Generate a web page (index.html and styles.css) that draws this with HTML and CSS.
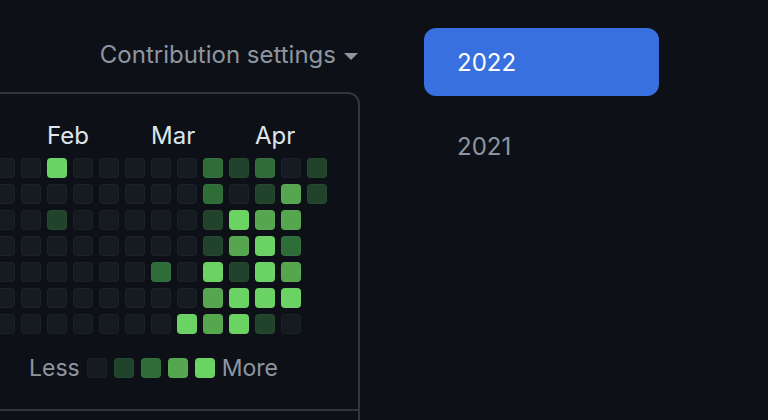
FILE: index.html
```html
<!DOCTYPE html>
<html lang="en">
<head>
  <meta charset="UTF-8" />
  <meta name="viewport" content="width=device-width, initial-scale=1" />
  <title>Contributions</title>
  <link rel="stylesheet" href="styles.css">
</head>
<body>

  <div class="layout">
    <div class="main">
      <div class="graph-head">
        <button class="settings" type="button">Contribution settings<span class="caret"></span></button>
      </div>

      <div class="calendar">
        <div class="months">
          <span class="month feb">Feb</span>
          <span class="month mar">Mar</span>
          <span class="month apr">Apr</span>
        </div>

        <div class="days">
          <span class="day"></span><span class="day"></span><span class="day"></span><span class="day"></span><span class="day"></span><span class="day"></span><span class="day"></span>
          <span class="day"></span><span class="day"></span><span class="day"></span><span class="day"></span><span class="day"></span><span class="day"></span><span class="day"></span>
          <span class="day"></span><span class="day"></span><span class="day"></span><span class="day"></span><span class="day"></span><span class="day"></span><span class="day"></span>
          <span class="day"></span><span class="day"></span><span class="day"></span><span class="day"></span><span class="day"></span><span class="day"></span><span class="day"></span>
          <span class="day l4"></span><span class="day"></span><span class="day l1"></span><span class="day"></span><span class="day"></span><span class="day"></span><span class="day"></span>
          <span class="day"></span><span class="day"></span><span class="day"></span><span class="day"></span><span class="day"></span><span class="day"></span><span class="day"></span>
          <span class="day"></span><span class="day"></span><span class="day"></span><span class="day"></span><span class="day"></span><span class="day"></span><span class="day"></span>
          <span class="day"></span><span class="day"></span><span class="day"></span><span class="day"></span><span class="day"></span><span class="day"></span><span class="day"></span>
          <span class="day"></span><span class="day"></span><span class="day"></span><span class="day"></span><span class="day l2"></span><span class="day"></span><span class="day"></span>
          <span class="day"></span><span class="day"></span><span class="day"></span><span class="day"></span><span class="day"></span><span class="day"></span><span class="day l4"></span>
          <span class="day l2"></span><span class="day l2"></span><span class="day l1"></span><span class="day l1"></span><span class="day l4"></span><span class="day l3"></span><span class="day l3"></span>
          <span class="day l1"></span><span class="day"></span><span class="day l4"></span><span class="day l3"></span><span class="day l1"></span><span class="day l4"></span><span class="day l4"></span>
          <span class="day l2"></span><span class="day l1"></span><span class="day l3"></span><span class="day l4"></span><span class="day l4"></span><span class="day l4"></span><span class="day l1"></span>
          <span class="day"></span><span class="day l3"></span><span class="day l3"></span><span class="day l2"></span><span class="day l3"></span><span class="day l4"></span><span class="day"></span>
          <span class="day l1"></span><span class="day l1"></span>
        </div>

        <div class="legend">
          <span class="legend-text">Less</span>
          <span class="day"></span>
          <span class="day l1"></span>
          <span class="day l2"></span>
          <span class="day l3"></span>
          <span class="day l4"></span>
          <span class="legend-text">More</span>
        </div>
      </div>

      <div class="activity"></div>
    </div>

    <nav class="years">
      <a class="year selected" href="#">2022</a>
      <a class="year" href="#">2021</a>
    </nav>
  </div>

</body>
</html>
```

FILE: styles.css
```css
body {
  margin: 0;
  font-family: Inter, "Liberation Sans", sans-serif;
  background-color: #0d1117;
  overflow: hidden;
}

.layout {
  display: flex;
  gap: 64px;
  padding-top: 28px;
}

.main {
  flex: none;
  width: 600px;
  margin-left: -240px;
}

.graph-head {
  height: 64px;
  display: flex;
  justify-content: flex-end;
  align-items: flex-start;
}

.settings {
  display: flex;
  align-items: center;
  background: none;
  border: none;
  padding: 0;
  margin-right: 2px;
  font-family: inherit;
  font-size: 24px;
  line-height: 54px;
  color: #8d96a0;
  cursor: pointer;
}

.caret {
  width: 0;
  height: 0;
  margin-left: 8px;
  margin-top: 3px;
  border-style: solid;
  border-width: 7px 7px 0;
  border-color: #8d96a0 transparent transparent;
}

.calendar {
  display: flex;
  flex-direction: column;
  align-items: flex-end;
  border: 2px solid #30363d;
  border-radius: 12px 12px 0 0;
  padding: 27px 31px 31px 0;
}

.months {
  display: grid;
  grid-template-columns: repeat(15, 20px);
  column-gap: 6px;
  height: 30px;
  line-height: 30px;
  margin-bottom: 7px;
  font-size: 24px;
  color: #dfe5eb;
}

.month {
  white-space: nowrap;
}

.month.feb { grid-column: 5; }
.month.mar { grid-column: 9; }
.month.apr { grid-column: 13; }

.days {
  display: grid;
  grid-template-rows: repeat(7, 20px);
  grid-auto-flow: column;
  grid-auto-columns: 20px;
  gap: 6px;
  margin-bottom: 24px;
}

.day {
  width: 20px;
  height: 20px;
  border-radius: 4px;
  background-color: #161b22;
  box-shadow: inset 0 0 0 1px rgba(255, 255, 255, 0.03);
}

.day.l1 { background-color: #22432b; }
.day.l2 { background-color: #2f6d38; }
.day.l3 { background-color: #56a64f; }
.day.l4 { background-color: #6bd264; }

.legend {
  display: flex;
  align-items: center;
  gap: 7px;
  height: 20px;
  margin-right: 49px;
}

.legend-text {
  font-size: 23px;
  line-height: 20px;
  color: #8d96a0;
}

.activity {
  height: 9px;
  border: 2px solid #30363d;
  border-top: none;
  border-bottom: none;
}

.years {
  flex: none;
  width: 235px;
}

.year {
  display: block;
  height: 68px;
  line-height: 70px;
  padding-left: 33px;
  margin-bottom: 16px;
  border-radius: 12px;
  font-size: 24px;
  color: #8d96a0;
  text-decoration: none;
}

.year.selected {
  background-color: #3970e0;
  color: #ffffff;
}
```
